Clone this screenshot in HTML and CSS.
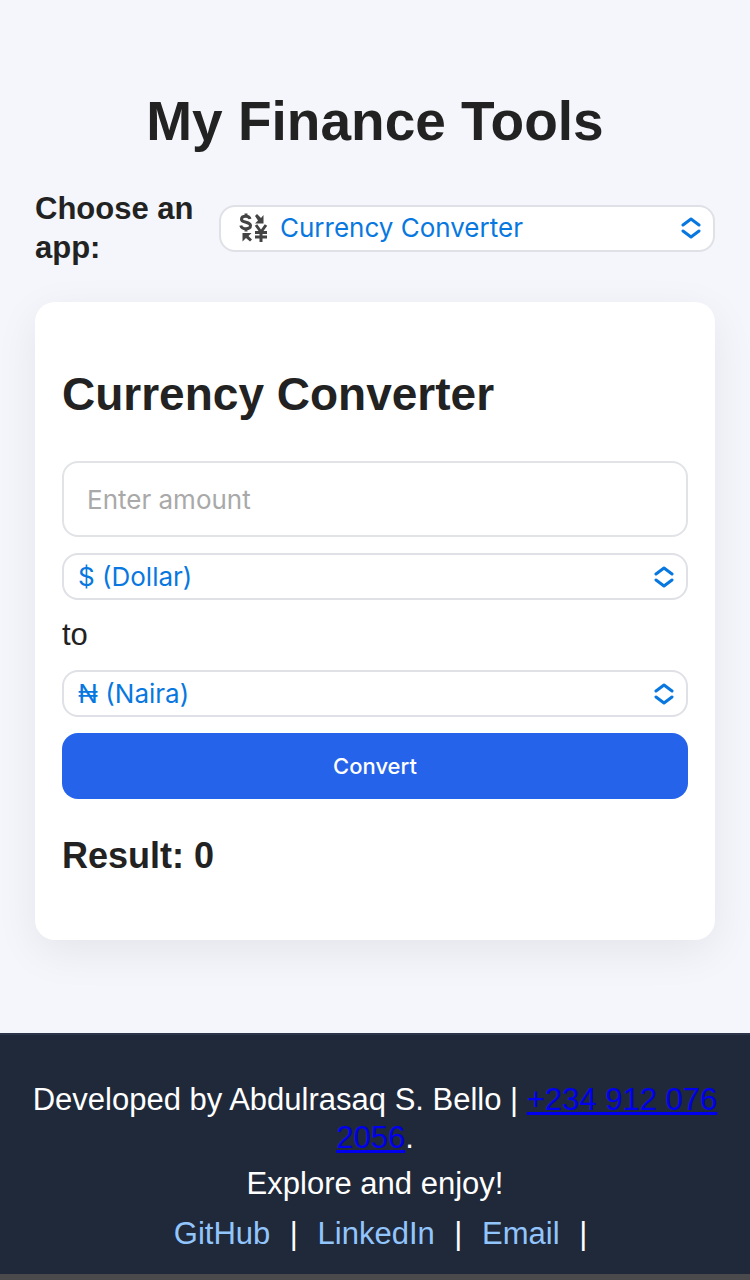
FILE: index.html
```html
<!DOCTYPE html>
<html lang="en">
<head>
<meta charset="utf-8">
<meta name="viewport" content="width=device-width, initial-scale=1">
<title>My Finance Tools</title>
<link rel="stylesheet" href="styles.css">
</head>
<body>
<main class="main">
  <h1 class="title">My Finance Tools</h1>
  <div class="chooser">
    <label class="chooser-label" for="app">Choose an app:</label>
    <div class="select-box">
      <svg class="exchange" viewBox="0 0 36 36" aria-hidden="true">
        <path class="sign" d="M14 9C13.500 6.800 11.800 6.300 10 6.300C7.500 6.300 5.500 7.200 5.500 9.200C5.500 11.500 8 11.700 10 12.200C12.500 12.800 14.500 13.500 14.500 15.600C14.500 17.800 12.300 18.800 10 18.800C7.300 18.800 5.300 17.600 4.800 15.500M10 3.500V7M10 18V21.500"/>
        <path class="sign" d="M20 15L25 22L30 15M25 22V32M19 22.500H31M19 27H31"/>
        <path d="M19 6L21 4L25 8L27.500 5V13.500H19L22 10.500Z"/>
        <path d="M6.500 23H15.500L12.500 26L16 29.500L14 31.500L10 28L6.500 31.500Z"/>
      </svg>
      <select class="select with-icon" id="app"><option>Currency Converter</option></select>
      <svg class="chevrons" viewBox="0 0 20 22" aria-hidden="true"><path d="M2 8l8-6 8 6M2 14l8 6 8-6"/></svg>
    </div>
  </div>
  <section class="card">
    <h2 class="card-title">Currency Converter</h2>
    <div class="form">
      <input class="amount" type="text" inputmode="decimal" placeholder="Enter amount" aria-label="Amount">
      <div class="select-box">
        <select class="select" aria-label="From currency"><option>$ (Dollar)</option></select>
        <svg class="chevrons" viewBox="0 0 20 22" aria-hidden="true"><path d="M2 8l8-6 8 6M2 14l8 6 8-6"/></svg>
      </div>
      <span>to</span>
      <div class="select-box">
        <select class="select" aria-label="To currency"><option>₦ (Naira)</option></select>
        <svg class="chevrons" viewBox="0 0 20 22" aria-hidden="true"><path d="M2 8l8-6 8 6M2 14l8 6 8-6"/></svg>
      </div>
      <button class="convert" type="button">Convert</button>
    </div>
    <h3 class="result">Result: 0</h3>
  </section>
</main>
<footer class="footer">
  <p class="credit">Developed by Abdulrasaq S. Bello | <a class="phone" href="tel:+2349120762056">+234 912 076 2056</a>.</p>
  <p class="explore">Explore and enjoy!</p>
  <p class="links"><a href="#">GitHub</a> | <a href="#">LinkedIn</a> | <a href="#">Email</a> |</p>
</footer>
</body>
</html>
```
FILE: styles.css
```css
* { box-sizing: border-box; }

body {
  margin: 0;
  min-height: 100vh;
  display: flex;
  flex-direction: column;
  background: #4a4a4c;
  color: #222;
  font: 31px/38px "Liberation Sans", Arial, sans-serif;
}

.main {
  padding: 84px 35px 93px;
  background: #f4f6fb;
}

.title {
  margin: 0 0 31px;
  font-size: 55px;
  line-height: 74px;
  text-align: center;
}

.chooser {
  display: grid;
  grid-template-columns: 160px 1fr;
  align-items: center;
  gap: 24px;
  margin-bottom: 35px;
}

.chooser-label {
  font-weight: bold;
  line-height: 39px;
}

.select-box {
  display: grid;
  align-items: center;
}

.select-box > * { grid-area: 1 / 1; }

.select {
  appearance: none;
  width: 100%;
  height: 47px;
  padding: 0 48px 0 14px;
  border: 2px solid #dfe1e6;
  border-radius: 16px;
  background: #fff;
  color: #0878e0;
  font: 26px/32px Inter, sans-serif;
}

.with-icon { padding-left: 59px; }

.chevrons,
.exchange {
  z-index: 1;
  pointer-events: none;
}

.chevrons {
  justify-self: end;
  width: 20px;
  height: 22px;
  margin-right: 14px;
  fill: none;
  stroke: #0878e0;
  stroke-width: 3;
  stroke-linecap: round;
  stroke-linejoin: round;
}

.exchange {
  width: 36px;
  height: 36px;
  margin-left: 17px;
  fill: #444;
}

.sign {
  fill: none;
  stroke: #444;
  stroke-width: 3;
}

.card {
  padding: 62px 27px 61px;
  border-radius: 20px;
  background: #fff;
  box-shadow: 0 12px 44px rgba(0, 0, 0, 0.07);
}

.card-title {
  margin: 0 0 37px;
  font-size: 46px;
  line-height: 60px;
}

.form {
  display: flex;
  flex-direction: column;
  gap: 16px;
}

.amount {
  width: 100%;
  height: 76px;
  padding: 0 23px;
  border: 2px solid #e1e3e7;
  border-radius: 16px;
  background: #fff;
  color: #222;
  font: 26px/32px Inter, sans-serif;
}

.amount::placeholder { color: #a9a9a9; }

.convert {
  height: 66px;
  border: 0;
  border-radius: 16px;
  background: #2563eb;
  color: #fff;
  font: 500 22px/28px Inter, sans-serif;
}

.result {
  margin: 34px 0 0;
  font-size: 36px;
  line-height: 46px;
}

.footer {
  padding: 46px 30px 21px;
  border-top: 2px solid #2b3448;
  background: #1f293a;
  color: #fff;
  text-align: center;
}

.footer p { margin: 0; }
.footer .explore { margin: 8px 0 12px; }
.phone { color: #0000ee; }

.links a {
  margin: 0 11px;
  color: #93c5fd;
  text-decoration: none;
}
```
